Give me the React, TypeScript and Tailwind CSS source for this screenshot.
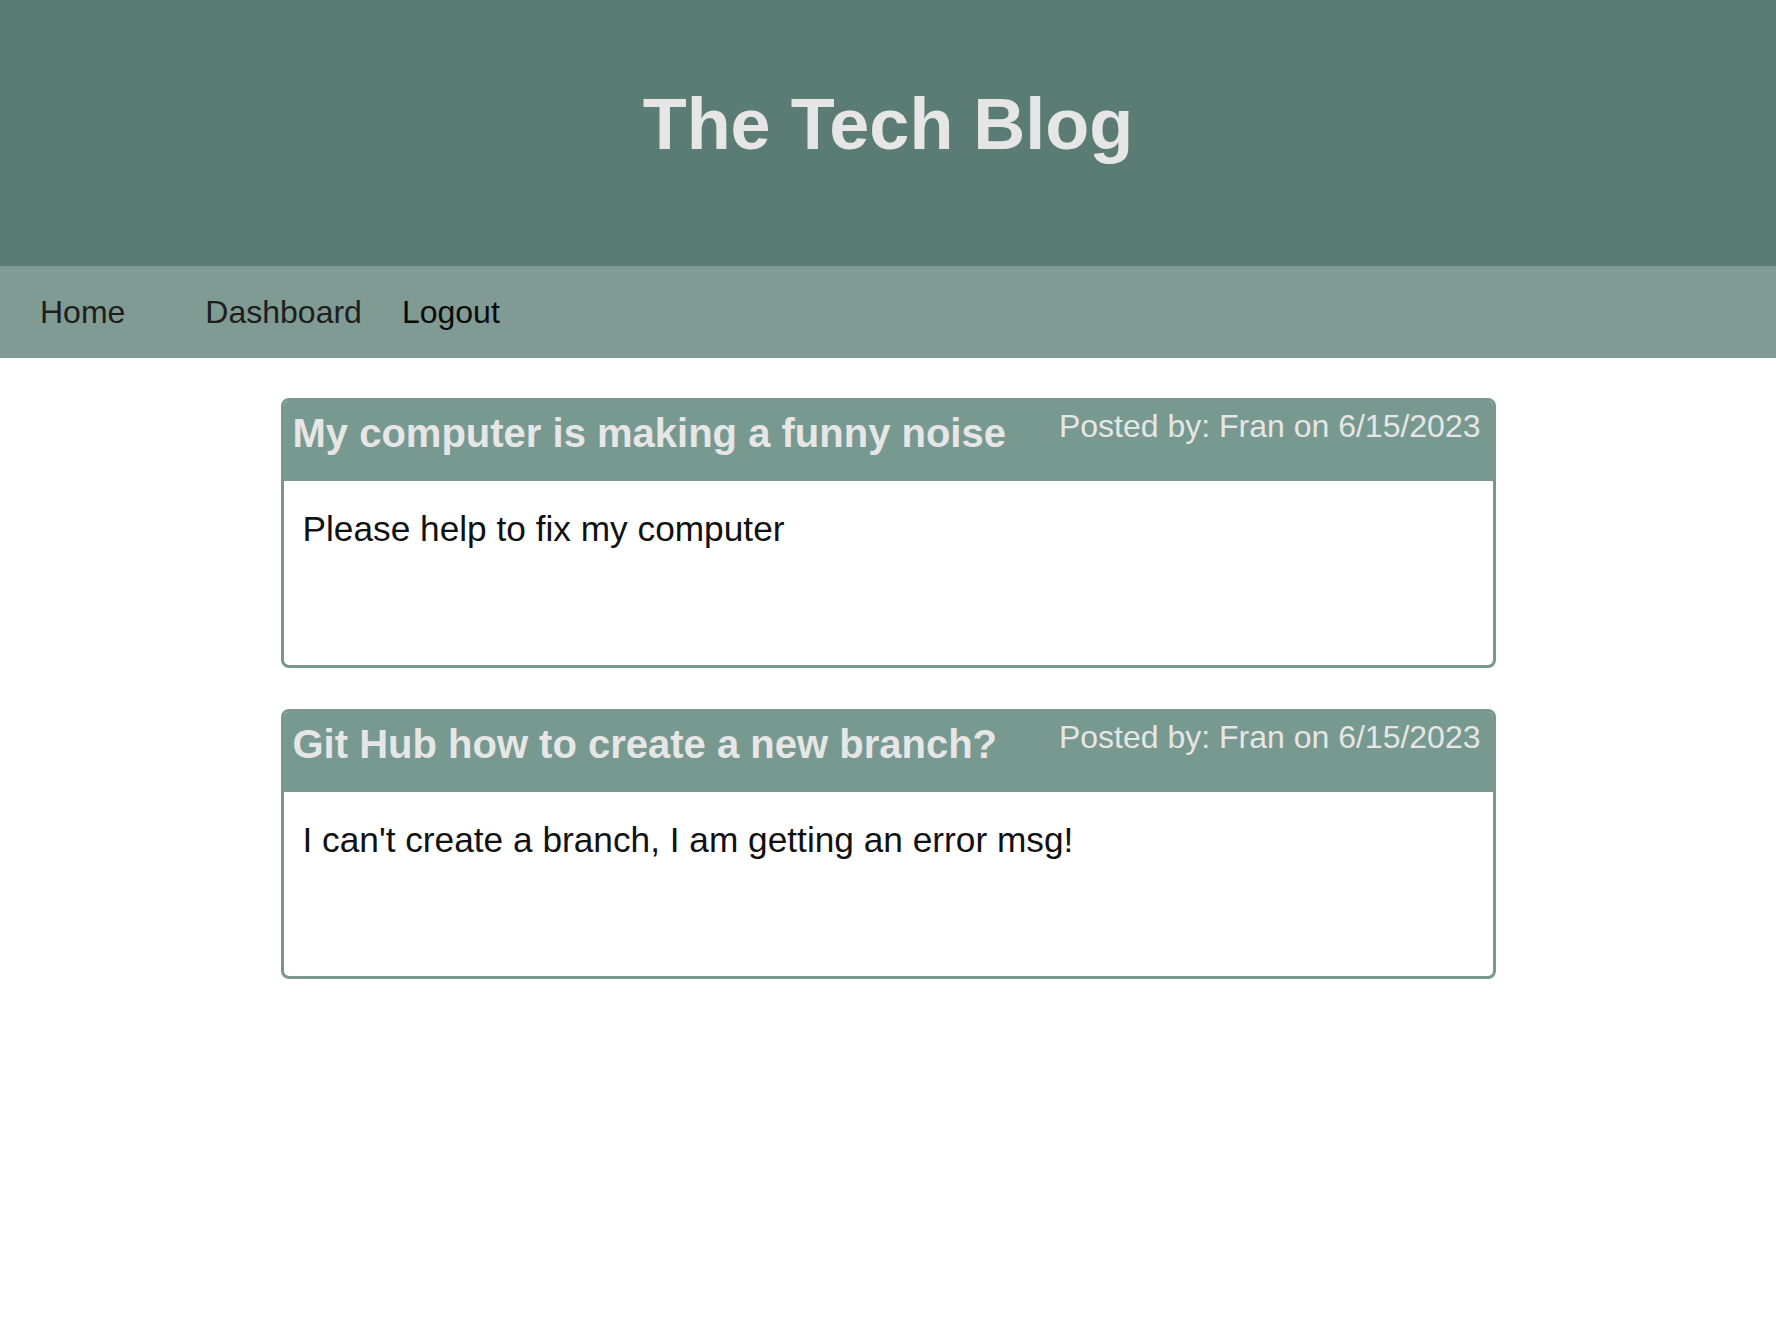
import React from "react";

const posts = [
  {
    title: "My computer is making a funny noise",
    meta: "Posted by: Fran on 6/15/2023",
    body: "Please help to fix my computer",
  },
  {
    title: "Git Hub how to create a new branch?",
    meta: "Posted by: Fran on 6/15/2023",
    body: "I can't create a branch, I am getting an error msg!",
  },
];

export default function App() {
  return (
    <div className="min-h-[1332px] bg-white font-['Liberation_Sans',Arial,sans-serif]">
      <header className="h-[266px] bg-[#5b7c74] pt-[83px]">
        <h1 className="text-center text-[72px] font-bold leading-[normal] text-[#e6e6e6]">
          The Tech Blog
        </h1>
      </header>
      <nav className="flex h-[92px] items-center bg-[#809b93] text-[32px] leading-[normal]">
        <a className="ml-[40px] text-[#1e1e1e]">Home</a>
        <a className="ml-[80px] text-[#1e1e1e]">Dashboard</a>
        <a className="ml-[40px] text-[#0a0a0a]">Logout</a>
      </nav>
      <main className="flex flex-col items-center pt-[40px]">
        {posts.map((p, i) => (
          <article
            key={i}
            className={`w-[1215px] overflow-hidden rounded-[8px] border-[3px] border-[#7b968f] bg-white ${
              i > 0 ? "mt-[41px]" : ""
            }`}
          >
            <div className="flex h-[80px] items-start justify-between bg-[#779990] pl-[9px] pr-[12px]">
              <h2 className="mt-[10px] text-[40px] font-bold leading-[normal] text-[#e6e6e6]">
                {p.title}
              </h2>
              <span className="mt-[7px] text-[32px] leading-[normal] text-[#e6e6e6]">
                {p.meta}
              </span>
            </div>
            <div className="h-[184px] pl-[19px] pt-[28px]">
              <p className="text-[35.25px] leading-[normal] text-[#111111]">{p.body}</p>
            </div>
          </article>
        ))}
      </main>
    </div>
  );
}
